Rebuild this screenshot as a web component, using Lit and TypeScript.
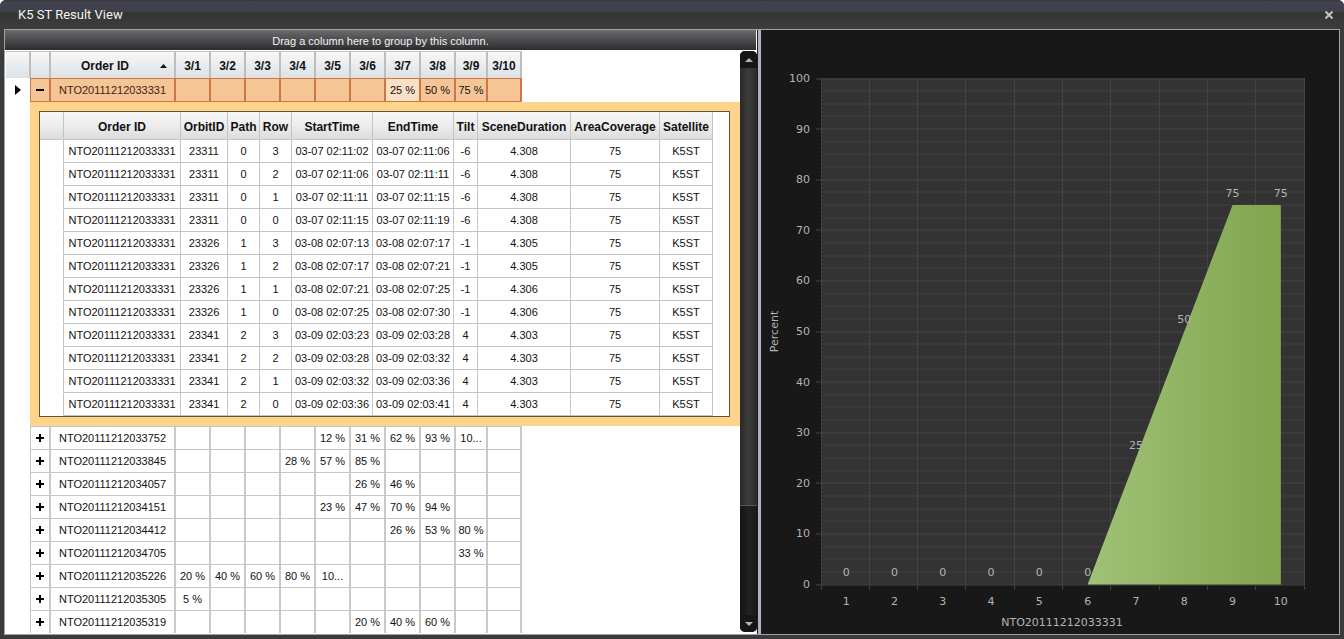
import { LitElement, html, svg, css } from "lit";
import { customElement, state } from "lit/decorators.js";
import { classMap } from "lit/directives/class-map.js";

const DAYS = ["3/1", "3/2", "3/3", "3/4", "3/5", "3/6", "3/7", "3/8", "3/9", "3/10"];

interface Order {
  id: string;
  days: string[];
}

const SELECTED: Order = { id: "NTO20111212033331", days: ["", "", "", "", "", "", "25 %", "50 %", "75 %", ""] };

const ORDERS: Order[] = [
  { id: "NTO20111212033752", days: ["", "", "", "", "12 %", "31 %", "62 %", "93 %", "10...", ""] },
  { id: "NTO20111212033845", days: ["", "", "", "28 %", "57 %", "85 %", "", "", "", ""] },
  { id: "NTO20111212034057", days: ["", "", "", "", "", "26 %", "46 %", "", "", ""] },
  { id: "NTO20111212034151", days: ["", "", "", "", "23 %", "47 %", "70 %", "94 %", "", ""] },
  { id: "NTO20111212034412", days: ["", "", "", "", "", "", "26 %", "53 %", "80 %", ""] },
  { id: "NTO20111212034705", days: ["", "", "", "", "", "", "", "", "33 %", ""] },
  { id: "NTO20111212035226", days: ["20 %", "40 %", "60 %", "80 %", "10...", "", "", "", "", ""] },
  { id: "NTO20111212035305", days: ["5 %", "", "", "", "", "", "", "", "", ""] },
  { id: "NTO20111212035319", days: ["", "", "", "", "", "20 %", "40 %", "60 %", "", ""] },
];

const SCENE_HEAD = ["Order ID", "OrbitID", "Path", "Row", "StartTime", "EndTime", "Tilt", "SceneDuration", "AreaCoverage", "Satellite"];

const SCENES: string[][] = [
  ["23311", "0", "3", "03-07 02:11:02", "03-07 02:11:06", "-6", "4.308"],
  ["23311", "0", "2", "03-07 02:11:06", "03-07 02:11:11", "-6", "4.308"],
  ["23311", "0", "1", "03-07 02:11:11", "03-07 02:11:15", "-6", "4.308"],
  ["23311", "0", "0", "03-07 02:11:15", "03-07 02:11:19", "-6", "4.308"],
  ["23326", "1", "3", "03-08 02:07:13", "03-08 02:07:17", "-1", "4.305"],
  ["23326", "1", "2", "03-08 02:07:17", "03-08 02:07:21", "-1", "4.305"],
  ["23326", "1", "1", "03-08 02:07:21", "03-08 02:07:25", "-1", "4.306"],
  ["23326", "1", "0", "03-08 02:07:25", "03-08 02:07:30", "-1", "4.306"],
  ["23341", "2", "3", "03-09 02:03:23", "03-09 02:03:28", "4", "4.303"],
  ["23341", "2", "2", "03-09 02:03:28", "03-09 02:03:32", "4", "4.303"],
  ["23341", "2", "1", "03-09 02:03:32", "03-09 02:03:36", "4", "4.303"],
  ["23341", "2", "0", "03-09 02:03:36", "03-09 02:03:41", "4", "4.303"],
].map((r) => ["NTO20111212033331", ...r, "75", "K5ST"]);

@customElement("scene-table")
class SceneTable extends LitElement {
  static styles = css`
    :host {
      display: block;
      background: #fff;
      border: 1px solid #5b5238;
    }
    .scenes {
      border-collapse: separate;
      border-spacing: 0;
      table-layout: fixed;
      width: 673px;
      font: 11px/16px "Liberation Sans", Arial, sans-serif;
      color: #111;
    }
    .mark { width: 24px; }
    .order { width: 117px; }
    .orbit { width: 47px; }
    .small { width: 32px; }
    .time { width: 81px; }
    .tilt { width: 24px; }
    .duration { width: 93px; }
    .area { width: 89px; }
    .sat { width: 53px; }
    th, td {
      box-sizing: border-box;
      padding: 0;
      text-align: center;
      white-space: nowrap;
      border-right: 1px solid #c4c4c4;
      border-bottom: 1px solid #c4c4c4;
    }
    th {
      height: 28px;
      padding-top: 2px;
      font-size: 12px;
      font-weight: bold;
      background: linear-gradient(#f6f6f6, #ededed 50%, #dcdcdc);
    }
    td { height: 23px; }
    td:first-child { border-bottom-color: transparent; }
  `;

  render() {
    return html`
      <table class="scenes" aria-label="Scenes">
        <colgroup>
          <col class="mark" /><col class="order" /><col class="orbit" /><col class="small" /><col class="small" />
          <col class="time" /><col class="time" /><col class="tilt" /><col class="duration" /><col class="area" /><col class="sat" />
        </colgroup>
        <thead>
          <tr><th></th>${SCENE_HEAD.map((h) => html`<th scope="col">${h}</th>`)}</tr>
        </thead>
        <tbody>
          ${SCENES.map((r) => html`<tr><td></td>${r.map((c) => html`<td>${c}</td>`)}</tr>`)}
        </tbody>
      </table>
    `;
  }
}

@customElement("order-grid")
class OrderGrid extends LitElement {
  @state() private open = true;

  static styles = css`
    :host {
      display: flex;
      flex-direction: column;
      background: #fff;
      font: 11px/16px "Liberation Sans", Arial, sans-serif;
      color: #111;
      overflow: hidden;
    }
    .group {
      flex: none;
      height: 20px;
      line-height: 22px;
      text-align: center;
      color: #f2f2f2;
      background: linear-gradient(#6b6b6d, #4c4c4e 50%, #2c2c2e);
      margin-right: 1px;
      border-bottom: 1px solid #fff;
    }
    .body {
      flex: 1;
      min-height: 0;
      display: flex;
    }
    .view {
      flex: 1;
      min-width: 0;
      overflow: hidden;
      padding-left: 1px;
    }
    .orders {
      border-collapse: separate;
      border-spacing: 0;
      table-layout: fixed;
      width: 100%;
    }
    .mark { width: 25px; }
    .toggle { width: 20px; }
    .order { width: 125px; }
    .day { width: 35px; }
    .narrow { width: 32px; }
    .last { width: 34px; }
    th, td {
      box-sizing: border-box;
      padding: 0;
      text-align: center;
      white-space: nowrap;
    }
    th {
      height: 27px;
      padding-top: 2px;
      font-size: 12px;
      font-weight: bold;
      border-top: 1px solid #c4c4c4;
      border-right: 2px solid #bdbdbd;
      background: linear-gradient(#f8f8f8, #eeeeee 40%, #e4ebf0 60%, #e0e0e0);
    }
    td {
      height: 23px;
      border-top: 1px solid #c6c6c6;
      border-right: 2px solid #c9c9c9;
    }
    td.mark, td.rest, th.rest {
      border: 0;
      background: none;
    }
    td.mark { border-right: 1px solid #c6c6c6; }
    .current td {
      height: 24px;
      background: #f5c596;
      border-color: #cd7747;
      border-bottom: 1px solid #cd7747;
    }
    .current td.focus { background: #fae0c6; }
    .current td.mark, .current td.rest {
      background: none;
      border: 0;
    }
    .current td.mark { border-right: 1px solid #cd7747; }
    .current .id { color: #4a1c10; }
    td.detail {
      height: auto;
      padding: 9px 10px 9px 8px;
      background: #fed48a;
      border: 0;
    }
    td.beside { border-right-color: #fed48a; }
    .sort {
      display: flex;
      align-items: center;
      width: 100%;
      border: 0;
      padding: 0 7px 0 30px;
      background: none;
      font: inherit;
      color: inherit;
    }
    .sort svg { margin-left: auto; }
    .expand {
      display: block;
      width: 100%;
      border: 0;
      padding: 0;
      background: none;
    }
    .expand svg, td.mark svg { display: block; margin: 0 auto; }
    .scroll {
      flex: none;
      width: 17px;
      margin-bottom: 2px;
      display: flex;
      flex-direction: column;
      background: linear-gradient(90deg, #151515, #222 60%, #181818);
      border-radius: 5px;
      overflow: hidden;
    }
    .arrow {
      flex: none;
      height: 17px;
      border: 0;
      padding: 0;
      background: #161616;
    }
    .arrow svg { display: block; margin: 0 auto; }
    .rail {
      flex: 1;
      min-height: 0;
    }
    .thumb {
      height: 80%;
      box-sizing: border-box;
      border-bottom: 1px solid #555;
      background: linear-gradient(90deg, #282828, #3c3c3c 50%, #2b2b2b);
    }
  `;

  private row(o: Order, current: boolean) {
    return html`
      <tr class=${classMap({ current })}>
        <td class="mark">
          ${current ? html`<svg width="6" height="10" viewBox="0 0 6 10" aria-hidden="true"><path d="M0 0 L6 5 L0 10Z" fill="#000" /></svg>` : ""}
        </td>
        <td>
          <button class="expand" aria-label="Toggle ${o.id}" aria-expanded=${current && this.open} @click=${() => { if (current) this.open = !this.open; }}>
            <svg width="8" height="8" viewBox="0 0 8 8" aria-hidden="true">
              <path d=${current && this.open ? "M0 3H8V5H0Z" : "M0 3H3V0H5V3H8V5H5V8H3V5H0Z"} fill="#000" />
            </svg>
          </button>
        </td>
        <td class="id">${o.id}</td>
        ${o.days.map((d, i) => html`<td class=${classMap({ focus: current && i === 6 })}>${d}</td>`)}
        <td class="rest"></td>
      </tr>
    `;
  }

  render() {
    return html`
      <div class="group">Drag a column here to group by this column.</div>
      <div class="body">
        <div class="view">
          <table class="orders" aria-label="Orders">
            <colgroup>
              <col class="mark" /><col class="toggle" /><col class="order" />
              ${DAYS.map((_, i) => html`<col class=${i === 8 ? "narrow" : i === 9 ? "last" : "day"} />`)}
              <col />
            </colgroup>
            <thead>
              <tr>
                <th></th>
                <th></th>
                <th scope="col" aria-sort="ascending">
                  <button class="sort">Order ID <svg width="7" height="4" viewBox="0 0 7 4" aria-hidden="true"><path d="M0 4L3.5 0L7 4Z" fill="#111" /></svg></button>
                </th>
                ${DAYS.map((d) => html`<th scope="col">${d}</th>`)}
                <th class="rest"></th>
              </tr>
            </thead>
            <tbody>
              ${this.row(SELECTED, true)}
              ${this.open ? html`<tr><td class="mark beside"></td><td class="detail" colspan="13"><scene-table></scene-table></td></tr>` : ""}
              ${ORDERS.map((o) => this.row(o, false))}
            </tbody>
          </table>
        </div>
        <div class="scroll">
          <button class="arrow" aria-label="Scroll up"><svg width="8" height="4" viewBox="0 0 8 4"><path d="M0 4L4 0L8 4Z" fill="#b5b5b5" /></svg></button>
          <div class="rail"><div class="thumb"></div></div>
          <button class="arrow" aria-label="Scroll down"><svg width="8" height="4" viewBox="0 0 8 4"><path d="M0 0L4 4L8 0Z" fill="#b5b5b5" /></svg></button>
        </div>
      </div>
    `;
  }
}

const VALUES = [0, 0, 0, 0, 0, 0, 25, 50, 75, 75];
const PLOT = { left: 60, right: 543, top: 48, bottom: 554 };

@customElement("percent-chart")
class PercentChart extends LitElement {
  static styles = css`
    :host {
      display: block;
      background: #181818;
      overflow: hidden;
    }
    .chart {
      display: block;
      width: 100%;
      height: 100%;
    }
    .plot { fill: #333; }
    .line { stroke: #414141; stroke-width: 1; }
    .major { stroke: #464646; stroke-width: 1; }
    .column { stroke: #4a4a4a; stroke-width: 1; stroke-dasharray: 3 1; }
    .text {
      font: 11px "DejaVu Sans", Verdana, sans-serif;
      fill: #b4b4b4;
      text-anchor: middle;
    }
    .end { text-anchor: end; }
  `;

  private x(i: number) {
    return PLOT.left + ((PLOT.right - PLOT.left) * i) / VALUES.length;
  }

  private y(v: number) {
    return PLOT.bottom - ((PLOT.bottom - PLOT.top) * v) / 100;
  }

  private snap(n: number) {
    return Math.floor(n) + 0.5;
  }

  render() {
    const { left, right, top, bottom } = PLOT;
    const first = VALUES.findIndex((v) => v > 0) - 1;
    const shown = VALUES.slice(first);
    const outline = shown.map((v, i) => `${this.x(first + i + 0.5)},${this.y(v)}`).join(" ");
    const end = `${this.x(VALUES.length - 0.5)},${bottom}`;
    return html`
      <svg class="chart" viewBox="0 0 577 603" role="img" aria-label="Percent by day">
        <defs>
          <linearGradient id="area">
            <stop offset="0" stop-color="#9fc277" />
            <stop offset="1" stop-color="#81a44f" />
          </linearGradient>
        </defs>
        <rect class="plot" x=${left} y=${top} width=${right - left} height=${bottom - top} />
        ${Array.from({ length: 41 }, (_, i) => {
          const y = this.snap(this.y(i * 2.5));
          const major = i % 4 === 0;
          return svg`<line class=${major ? "major" : "line"} x1=${major ? left - 6 : left} x2=${right} y1=${y} y2=${y} />`;
        })}
        ${Array.from({ length: 11 }, (_, i) => {
          const x = this.snap(this.x(i) - 1);
          return svg`<line class="column" x1=${x} x2=${x} y1=${top} y2=${bottom + 5} />`;
        })}
        <polygon points="${outline} ${end}" fill="url(#area)" />
        ${VALUES.map((v, i) => svg`
          <text class="text" x=${this.x(i + 0.5)} y=${Math.floor(this.y(v)) - 8 - (v < 75 ? 1 : 0)}>${v}</text>
          <text class="text" x=${this.x(i + 0.5)} y=${bottom + 20}>${i + 1}</text>
        `)}
        ${Array.from({ length: 11 }, (_, i) => svg`<text class="text end" x=${left - 12} y=${Math.round(this.y(i * 10)) + 3}>${i * 10}</text>`)}
        <text class="text" x=${Math.floor((left + right) / 2) - 1} y="595">NTO20111212033331</text>
        <text class="text" transform="translate(16 301) rotate(-90)">Percent</text>
      </svg>
    `;
  }
}

@customElement("app-root")
class AppRoot extends LitElement {
  static styles = css`
    :host {
      display: flex;
      flex-direction: column;
      box-sizing: border-box;
      height: 100vh;
      padding: 0 4px 4px;
      background: #3b3b3b;
      border-radius: 6px 6px 0 0;
      overflow: hidden;
    }
    .bar {
      flex: none;
      display: flex;
      align-items: center;
      justify-content: space-between;
      height: 29px;
      margin: 0 -4px;
      padding: 0 9px 0 18px;
      box-sizing: border-box;
      background: linear-gradient(#33343c, #43434f 2px, #3f404b 11px, #343634 13px, #3d3d3d);
    }
    .title {
      margin: 0;
      font: 13px/16px Roboto, "Liberation Sans", sans-serif;
      color: #f2f2f2;
    }
    .close {
      border: 0;
      padding: 2px;
      background: none;
    }
    .close svg { display: block; }
    .panes {
      flex: 1;
      min-height: 0;
      display: flex;
      border: 1px solid #a2a2a2;
    }
    .grid {
      flex: 752 1 0;
      min-width: 0;
    }
    .split {
      flex: none;
      width: 3px;
      background: #b3b1bf;
      border: solid #1a1a1e;
      border-width: 0 1px;
    }
    .plot {
      flex: 577 1 0;
      min-width: 0;
    }
  `;

  render() {
    return html`
      <header class="bar">
        <h1 class="title">K5 ST Result View</h1>
        <button class="close" aria-label="Close">
          <svg width="8" height="8" viewBox="0 0 8 8"><path d="M0.5 0.5L7.5 7.5M7.5 0.5L0.5 7.5" stroke="#c4c4c4" stroke-width="2" /></svg>
        </button>
      </header>
      <main class="panes">
        <order-grid class="grid"></order-grid>
        <div class="split"></div>
        <percent-chart class="plot"></percent-chart>
      </main>
    `;
  }
}
